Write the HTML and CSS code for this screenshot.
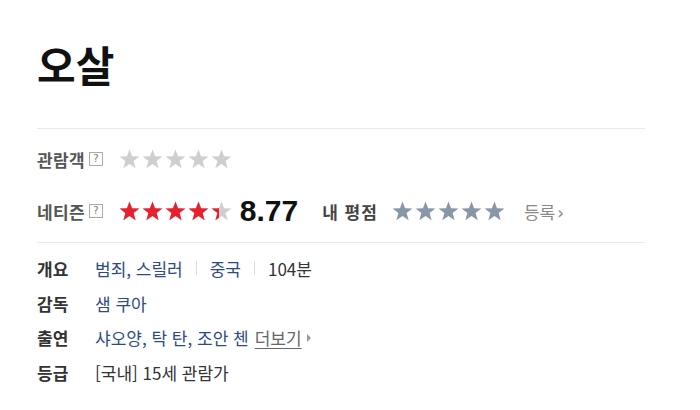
FILE: index.html
```html
<!DOCTYPE html>
<html lang="ko">
<head>
    <meta charset="UTF-8">
    <meta name="viewport" content="width=device-width, initial-scale=1.0">
    <title>오살</title>
    <link rel="stylesheet" href="styles.css">
</head>
<body>
    <svg width="0" height="0" class="defs">
        <defs>
            <symbol id="star" viewBox="0 0 24 24">
                <polygon points="12,1.5 14.8,9 22.8,9.2 16.5,14.2 18.7,22 12,17.4 5.3,22 7.5,14.2 1.2,9.2 9.2,9"/>
            </symbol>
        </defs>
    </svg>

    <div class="movie">
        <h1 class="movie-title">오살</h1>

        <div class="score-box">
            <div class="score-row">
                <span class="score-label">관람객</span>
                <span class="help">?</span>
                <span class="stars stars-empty">
                    <svg><use href="#star"/></svg><svg><use href="#star"/></svg><svg><use href="#star"/></svg><svg><use href="#star"/></svg><svg><use href="#star"/></svg>
                </span>
            </div>
            <div class="score-row">
                <span class="score-label">네티즌</span>
                <span class="help">?</span>
                <span class="stars stars-empty">
                    <svg><use href="#star"/></svg><svg><use href="#star"/></svg><svg><use href="#star"/></svg><svg><use href="#star"/></svg><svg><use href="#star"/></svg>
                    <span class="stars-fill" style="width: 87.7%;">
                        <svg><use href="#star"/></svg><svg><use href="#star"/></svg><svg><use href="#star"/></svg><svg><use href="#star"/></svg><svg><use href="#star"/></svg>
                    </span>
                </span>
                <span class="score-num">8.77</span>
                <span class="my-label">내 평점</span>
                <span class="stars stars-mine">
                    <svg><use href="#star"/></svg><svg><use href="#star"/></svg><svg><use href="#star"/></svg><svg><use href="#star"/></svg><svg><use href="#star"/></svg>
                </span>
                <a class="register">등록<span class="arrow">›</span></a>
            </div>
        </div>

        <dl class="info">
            <div class="info-row">
                <dt>개요</dt>
                <dd><a>범죄</a>, <a>스릴러</a><span class="sep"></span><a>중국</a><span class="sep"></span><span class="plain">104분</span></dd>
            </div>
            <div class="info-row">
                <dt>감독</dt>
                <dd><a>샘 쿠아</a></dd>
            </div>
            <div class="info-row">
                <dt>출연</dt>
                <dd><a>샤오양</a>, <a>탁 탄</a>, <a>조안 첸</a><a class="more">더보기</a><span class="more-arrow"></span></dd>
            </div>
            <div class="info-row">
                <dt>등급</dt>
                <dd><span class="plain">[국내] 15세 관람가</span></dd>
            </div>
        </dl>
    </div>
</body>
</html>
```

FILE: styles.css
```css
body {
    margin: 0;
    padding: 0;
    background-color: #fff;
    color: #333;
    font-family: "Noto Sans CJK KR", "Noto Sans", sans-serif;
}

.defs {
    position: absolute;
}

.movie {
    width: 608px;
    padding: 33px 0 0 37px;
}

.movie-title {
    margin: 0;
    font-size: 42px;
    line-height: 62px;
    font-weight: bold;
    color: #111;
}

.score-box {
    margin-top: 33px;
    border-top: 1px solid #e8e8e8;
    border-bottom: 1px solid #e8e8e8;
    padding: 12px 0 13px;
}

.score-row {
    display: flex;
    align-items: center;
    height: 36px;
}

.score-row + .score-row {
    margin-top: 16px;
}

.score-label {
    font-size: 17px;
    font-weight: bold;
    color: #555;
    letter-spacing: 0.3px;
}

.help {
    display: inline-flex;
    align-items: center;
    justify-content: center;
    width: 12px;
    height: 12px;
    border: 1px solid #aaa;
    margin-left: 4px;
    font-size: 10px;
    line-height: 1;
    color: #777;
    font-family: "DejaVu Sans", sans-serif;
}

.stars {
    position: relative;
    display: inline-flex;
    margin-left: 15px;
}

.stars svg {
    width: 23px;
    height: 22px;
    flex-shrink: 0;
}

.stars-empty svg {
    fill: #cfcfcf;
}

.stars-fill {
    position: absolute;
    top: 0;
    left: 0;
    display: flex;
    overflow: hidden;
}

.stars-fill svg {
    fill: #e8202e;
}

.score-num {
    margin-left: 7px;
    font-family: "Liberation Sans", Arial, sans-serif;
    font-size: 30px;
    font-weight: bold;
    color: #111;
}

.my-label {
    margin-left: 24px;
    font-size: 17px;
    font-weight: bold;
    color: #444;
    letter-spacing: 1px;
}

.stars-mine {
    margin-left: 13px;
}

.stars-mine svg {
    fill: #8897a8;
}

.register {
    margin-left: 18px;
    font-size: 17px;
    color: #888;
}

.register .arrow {
    margin-left: 2px;
    font-family: "DejaVu Sans", sans-serif;
}

.info {
    margin: 8px 0 0;
    padding: 0;
}

.info-row {
    display: flex;
    align-items: center;
    height: 34.7px;
    font-size: 17px;
}

.info dt {
    width: 58px;
    font-weight: bold;
    color: #333;
}

.info dd {
    margin: 0;
    display: flex;
    align-items: center;
    color: #2d4a86;
    white-space: pre;
}

.info a {
    color: #2d4a86;
}

.info .plain {
    color: #333;
}

.sep {
    display: inline-block;
    width: 1px;
    height: 14px;
    background-color: #ddd;
    margin: 0 13px;
}

.info .more {
    margin-left: 6px;
    color: #666;
    text-decoration: underline;
    text-underline-offset: 3px;
}

.more-arrow {
    display: inline-block;
    margin-left: 5px;
    border-left: 4px solid #999;
    border-top: 4px solid transparent;
    border-bottom: 4px solid transparent;
}
```
